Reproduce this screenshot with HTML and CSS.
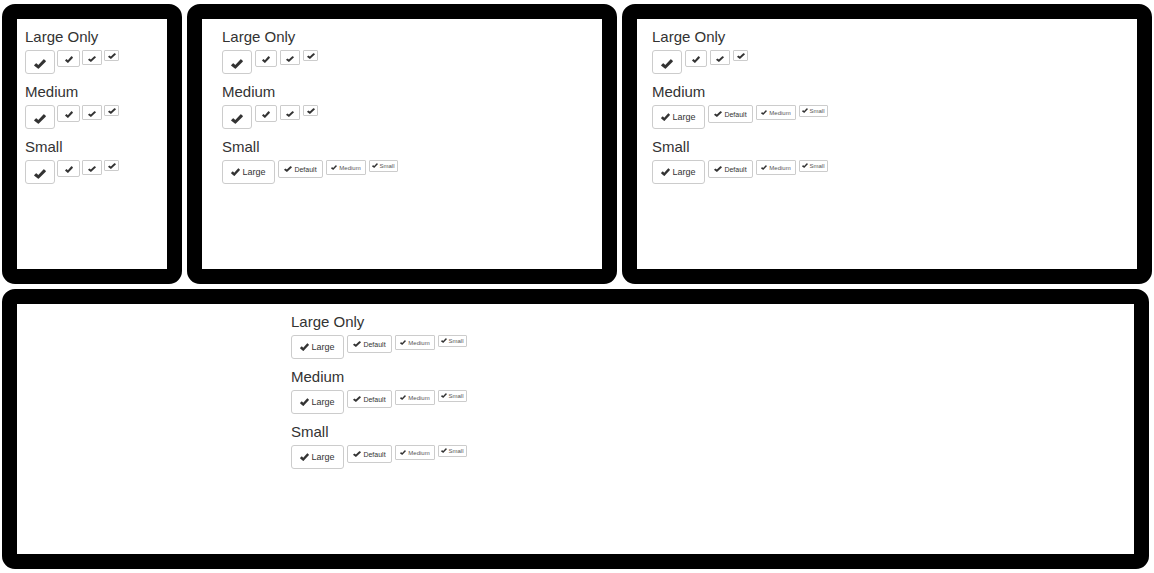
FILE: index.html
```html
<!DOCTYPE html>
<html lang="en">
<head>
<meta charset="utf-8">
<title>Responsive buttons</title>
<link rel="stylesheet" href="styles.css">
</head>
<body>
<svg class="sprite" aria-hidden="true">
  <symbol id="ok" viewBox="0 0 24 20" preserveAspectRatio="none">
    <path d="M.6 12 3.600 9Q4.500 8.200 5.400 9L8.600 12 18.800 1Q19.700.2 20.600 1L23.400 3.600Q24.200 4.500 23.400 5.400L9.700 19.200Q8.700 20.200 7.700 19.200L.6 13.600Q-.2 12.800.6 12Z"/>
  </symbol>
</svg>
<main class="devices" id="devices"></main>
<template id="compact">
  <div class="buttons compact">
    <button type="button" class="btn large" aria-label="Large"><svg class="icon"><use href="#ok"/></svg></button>
    <button type="button" class="btn default" aria-label="Default"><svg class="icon"><use href="#ok"/></svg></button>
    <button type="button" class="btn medium" aria-label="Medium"><svg class="icon"><use href="#ok"/></svg></button>
    <button type="button" class="btn small" aria-label="Small"><svg class="icon"><use href="#ok"/></svg></button>
  </div>
</template>
<template id="labelled">
  <div class="buttons labelled">
    <button type="button" class="btn large"><svg class="icon"><use href="#ok"/></svg>Large</button>
    <button type="button" class="btn default"><svg class="icon"><use href="#ok"/></svg>Default</button>
    <button type="button" class="btn medium"><svg class="icon"><use href="#ok"/></svg>Medium</button>
    <button type="button" class="btn small"><svg class="icon"><use href="#ok"/></svg>Small</button>
  </div>
</template>
<script src="devices.js"></script>
</body>
</html>
```
FILE: styles.css
```css
* {
  box-sizing: border-box;
}

body {
  margin: 0;
  background: #fff;
  color: #333;
  font-family: "Liberation Sans", Arial, sans-serif;
}

.sprite {
  display: none;
}

.devices {
  display: grid;
  grid-template-columns: 180fr 430fr 530fr;
  gap: 5px;
  padding: 4px 2px;
}

.device {
  min-height: 280px;
  padding: 9px 8px;
  border: 15px solid #000;
  border-radius: 13px;
  background: #fff;
}

.desktop {
  grid-column: 1 / -1;
  margin-right: 3px;
}

.container {
  display: grid;
  gap: 9px;
  margin: 0 auto;
}

.tablet .container {
  max-width: 360px;
}

.laptop .container {
  max-width: 470px;
}

.desktop .container {
  max-width: 569px;
}

.title {
  margin: 0 0 4px;
  font-size: 15px;
  font-weight: 400;
  line-height: 18px;
}

.buttons {
  display: flex;
  align-items: flex-start;
  gap: 3px;
}

.btn {
  display: flex;
  align-items: center;
  justify-content: center;
  gap: 2px;
  margin: 0;
  padding: 0;
  border: 1px solid #ccc;
  border-radius: 2px;
  background: #fff;
  color: #333;
  font-family: inherit;
  line-height: 1;
  white-space: nowrap;
}

.icon {
  flex: none;
  width: 8px;
  height: 6px;
  fill: #333;
}

.large {
  height: 24px;
  border-radius: 3px;
  font-size: 9px;
}

.default {
  height: 18px;
  font-size: 7px;
}

.medium {
  height: 15px;
  border-radius: 1px;
  font-size: 6px;
}

.small {
  height: 12px;
  border-radius: 1px;
  font-size: 6px;
}

.compact .btn {
  padding-top: 2px;
}

.compact .large {
  width: 30px;
  padding-top: 3px;
}

.compact .large .icon {
  width: 12px;
  height: 10px;
}

.compact .default {
  width: 22px;
  height: 17px;
}

.compact .default .icon {
  height: 7px;
}

.compact .medium {
  width: 20px;
}

.compact .small {
  width: 15px;
  height: 11px;
  padding-top: 1px;
}

.phone .buttons {
  gap: 2px;
}

.phone .default {
  width: 23px;
}

.labelled .large {
  width: 53px;
}

.labelled .large .icon {
  width: 9px;
  height: 8px;
}

.labelled .default {
  width: 45px;
}

.labelled .default .icon {
  width: 8px;
}

.labelled .medium {
  width: 40px;
  color: #555;
}

.labelled .small {
  width: 29px;
  gap: 1px;
  padding-bottom: 1px;
  color: #555;
}

.labelled .medium .icon,
.labelled .small .icon {
  width: 6px;
  height: 5px;
}
```
FILE: devices.js
```js
const titles = ["Large Only", "Medium", "Small"];

// Each device shows labels from the given row onwards.
const devices = [
  { name: "phone", labelsFrom: 3 },
  { name: "tablet", labelsFrom: 2 },
  { name: "laptop", labelsFrom: 1 },
  { name: "desktop", labelsFrom: 0 }
];

const root = document.getElementById("devices");

devices.forEach(({ name, labelsFrom }) => {
  const device = document.createElement("section");
  device.className = `device ${name}`;
  const container = document.createElement("div");
  container.className = "container";
  titles.forEach((title, row) => {
    const group = document.createElement("div");
    const heading = document.createElement("h2");
    heading.className = "title";
    heading.textContent = title;
    const template = document.getElementById(row >= labelsFrom ? "labelled" : "compact");
    group.append(heading, template.content.cloneNode(true));
    container.append(group);
  });
  device.append(container);
  root.append(device);
});
```
